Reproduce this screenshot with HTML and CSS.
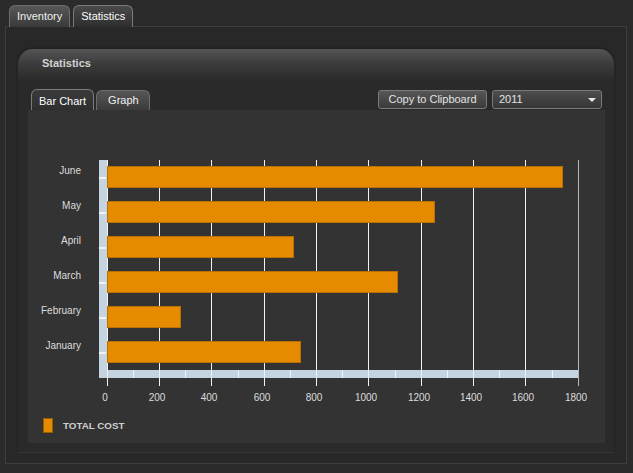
FILE: index.html
```html
<!DOCTYPE html>
<html>
<head>
<meta charset="utf-8">
<link rel="stylesheet" href="styles.css">
</head>
<body>
<div class="app">
  <div class="top-tabs">
    <div class="top-tab">Inventory</div>
    <div class="top-tab active">Statistics</div>
  </div>
  <div class="outer">
    <div class="panel">
      <div class="panel-header">Statistics</div>
      <div class="panel-body">
        <div class="toolbar">
          <div class="sub-tab active">Bar Chart</div>
          <div class="sub-tab wide">Graph</div>
          <div class="spacer"></div>
          <div class="btn">Copy to Clipboard</div>
          <div class="select"><span>2011</span><span class="arrow"></span></div>
        </div>
        <div class="chart">
          <svg class="chart-svg" width="577" height="333" viewBox="0 0 577 333" shape-rendering="crispEdges">
            <!-- axis bars -->
            <rect x="71" y="50" width="8" height="218" fill="#c4d4e1"/>
            <rect x="71" y="260" width="479" height="8" fill="#c4d4e1"/>
            <line x1="79" y1="50.5" x2="550" y2="50.5" stroke="#3d312b"/>
            <!-- gridlines -->
            <g stroke="#f2f2f2" stroke-width="1">
              <line x1="79.5" y1="50" x2="79.5" y2="276"/>
              <line x1="131.5" y1="50" x2="131.5" y2="276"/>
              <line x1="183.5" y1="50" x2="183.5" y2="276"/>
              <line x1="236.5" y1="50" x2="236.5" y2="276"/>
              <line x1="288.5" y1="50" x2="288.5" y2="276"/>
              <line x1="340.5" y1="50" x2="340.5" y2="276"/>
              <line x1="393.5" y1="50" x2="393.5" y2="276"/>
              <line x1="445.5" y1="50" x2="445.5" y2="276"/>
              <line x1="497.5" y1="50" x2="497.5" y2="276"/>
              <line x1="550.5" y1="50" x2="550.5" y2="276" stroke="#b8b8b8"/>
            </g>
            <!-- minor ticks -->
            <g stroke="#f2f2f2">
              <line x1="105.5" y1="260" x2="105.5" y2="268"/>
              <line x1="157.5" y1="260" x2="157.5" y2="268"/>
              <line x1="210.5" y1="260" x2="210.5" y2="268"/>
              <line x1="262.5" y1="260" x2="262.5" y2="268"/>
              <line x1="314.5" y1="260" x2="314.5" y2="268"/>
              <line x1="367.5" y1="260" x2="367.5" y2="268"/>
              <line x1="419.5" y1="260" x2="419.5" y2="268"/>
              <line x1="471.5" y1="260" x2="471.5" y2="268"/>
              <line x1="524.5" y1="260" x2="524.5" y2="268"/>
            </g>
            <!-- bars -->
            <g fill="#e68a00" stroke="#b87000" stroke-width="1">
              <rect x="79.5" y="56.5" width="455" height="21"/>
              <rect x="79.5" y="91.5" width="327" height="21"/>
              <rect x="79.5" y="126.5" width="186" height="21"/>
              <rect x="79.5" y="161.5" width="290" height="21"/>
              <rect x="79.5" y="196.5" width="73" height="21"/>
              <rect x="79.5" y="231.5" width="193" height="21"/>
            </g>
            <!-- y ticks -->
            <g fill="#f2f2f2">
              <rect x="71" y="67" width="7" height="2"/>
              <rect x="71" y="102" width="7" height="2"/>
              <rect x="71" y="137" width="7" height="2"/>
              <rect x="71" y="172" width="7" height="2"/>
              <rect x="71" y="207" width="7" height="2"/>
              <rect x="71" y="242" width="7" height="2"/>
            </g>
            <!-- labels -->
            <g class="lbl" text-anchor="end">
              <text x="53" y="64">June</text>
              <text x="53" y="99">May</text>
              <text x="53" y="134">April</text>
              <text x="53" y="169">March</text>
              <text x="53" y="204">February</text>
              <text x="53" y="239">January</text>
            </g>
            <g class="lbl" text-anchor="middle">
              <text x="77" y="291">0</text>
              <text x="129" y="291">200</text>
              <text x="181" y="291">400</text>
              <text x="234" y="291">600</text>
              <text x="286" y="291">800</text>
              <text x="338" y="291">1000</text>
              <text x="391" y="291">1200</text>
              <text x="443" y="291">1400</text>
              <text x="495" y="291">1600</text>
              <text x="548" y="291">1800</text>
            </g>
            <!-- legend -->
            <rect x="15.5" y="308.5" width="9" height="14" fill="#e68a00" stroke="#9a5d00"/>
            <text class="legend" x="35" y="319">TOTAL COST</text>
          </svg>
        </div>
      </div>
    </div>
  </div>
</div>
</body>
</html>
```

FILE: styles.css
```css
html, body {
  margin: 0;
  padding: 0;
}
body {
  background: #2b2b2b;
  font-family: "Liberation Sans", Arial, sans-serif;
  width: 633px;
  height: 473px;
  overflow: hidden;
}
.app {
  padding: 5px 0 0 5px;
}
.top-tabs {
  display: flex;
  gap: 3px;
  padding-left: 4px;
  height: 21px;
  position: relative;
  z-index: 1;
}
.top-tab {
  box-sizing: border-box;
  height: 22px;
  padding: 0 7px;
  border: 1px solid #6e6e6e;
  border-bottom: none;
  border-radius: 6px 6px 0 0;
  background: linear-gradient(#575757, #3a3a3a);
  color: #f0f0f0;
  font-size: 11px;
  line-height: 20px;
}
.top-tab.active {
  background: linear-gradient(#4a4a4a, #2e2e2e);
  border-color: #7a7a7a;
  color: #ffffff;
}
.outer {
  box-sizing: border-box;
  width: 622px;
  height: 438px;
  border: 1px solid #3d3d3d;
  background: #282828;
  padding: 22px 0 0 12px;
}
.panel {
  width: 596px;
  height: 403px;
  border-radius: 15px 15px 0 0;
  background: #2a2a2a;
  box-shadow: 0 1px 0 #343434, 0 -1px 2px #1f1f1f;
}
.panel-header {
  height: 31px;
  border-radius: 15px 15px 0 0;
  background: linear-gradient(#555555, #3d3d3d 45%, #2b2b2b);
  padding-left: 24px;
  color: #d2d2d2;
  font-weight: bold;
  font-size: 11px;
  line-height: 28px;
}
.panel-body {
  padding: 9px 9px 0 10px;
}
.toolbar {
  display: flex;
  align-items: flex-start;
  height: 21px;
  padding: 0 3px;
}
.sub-tab {
  box-sizing: border-box;
  height: 20px;
  padding: 0 7px;
  border: 1px solid #6e6e6e;
  border-bottom: none;
  border-radius: 6px 6px 0 0;
  background: linear-gradient(#565656, #3b3b3b);
  color: #f0f0f0;
  font-size: 11px;
  line-height: 19px;
  margin-top: 1px;
  margin-right: 2px;
}
.sub-tab.wide {
  padding: 0 10px 0 11px;
}
.sub-tab.active {
  height: 21px;
  margin-top: 0;
  line-height: 22px;
  background: linear-gradient(#3a3a3a, #2f2f2f);
  border-color: #7c7c7c;
  color: #ffffff;
}
.spacer {
  flex: 1;
}
.btn, .select {
  box-sizing: border-box;
  height: 19px;
  margin-top: 1px;
  border: 1px solid #7a7a7a;
  border-radius: 3px;
  background: linear-gradient(#575757, #3a3a3a);
  color: #e2e2e2;
  font-size: 11px;
  line-height: 17px;
}
.btn {
  width: 109px;
  text-align: center;
}
.select {
  width: 110px;
  margin-left: 5px;
  padding: 0 5px 0 6px;
  display: flex;
  justify-content: space-between;
  align-items: center;
  background: linear-gradient(#4e4e4e, #353535);
}
.arrow {
  width: 0;
  height: 0;
  border-left: 4px solid transparent;
  border-right: 4px solid transparent;
  border-top: 4px solid #e8e8e8;
  margin-top: 1px;
}
.chart {
  height: 333px;
  background: #333333;
}
.chart-svg {
  display: block;
}
.lbl text {
  font-family: "Liberation Sans", Arial, sans-serif;
  font-size: 10px;
  fill: #dddddd;
}
.legend {
  font-family: "Liberation Sans", Arial, sans-serif;
  font-size: 9.8px;
  font-weight: bold;
  fill: #cfcfcf;
}
```
